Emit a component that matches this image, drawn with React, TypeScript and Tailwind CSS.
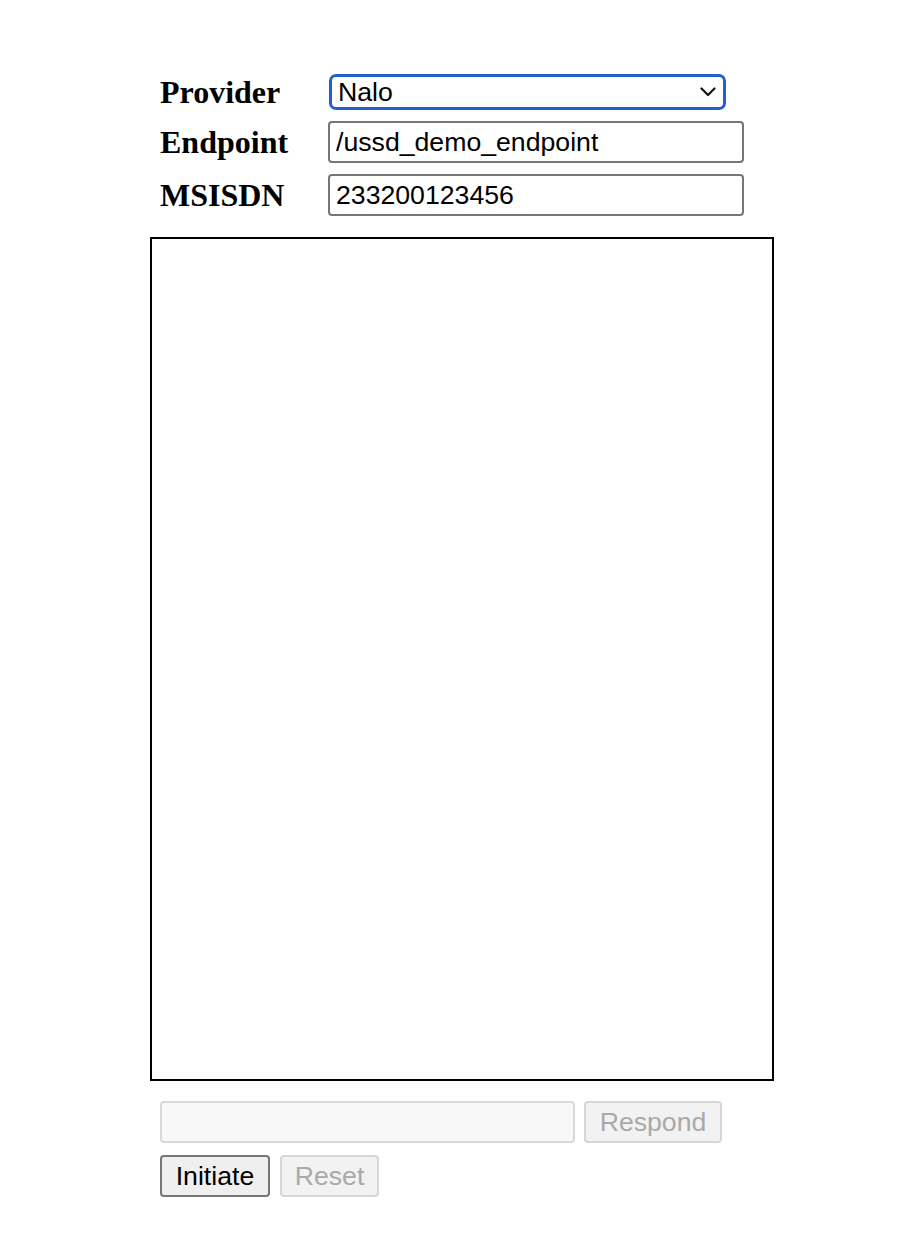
import React from "react";

export default function App() {
  const serif = { fontFamily: '"Liberation Serif", "Times New Roman", serif' } as React.CSSProperties;
  return (
    <div className="min-h-[1254px] w-[914px] bg-white pt-[74px] pl-[150px] text-black" style={{ fontFamily: '"Liberation Sans", Arial, sans-serif' }}>
      <div className="flex flex-col pl-[10px]">
        <div className="flex h-[36px] items-center">
          <div className="w-[169px] text-[32px] font-bold leading-none" style={serif}>Provider</div>
          <div className="relative h-[36px] w-[397px]">
            <select
              className="h-[36px] w-[397px] appearance-none rounded-[7px] border-[3px] border-[#2360cf] bg-white pl-[6px] text-[26.67px] leading-none text-black outline-none"
              defaultValue="Nalo"
            >
              <option>Nalo</option>
            </select>
            <svg className="pointer-events-none absolute right-[10px] top-[13px]" width="16" height="10" viewBox="0 0 16 10" fill="none">
              <path d="M1.5 1.5 L8 8 L14.5 1.5" stroke="#111" strokeWidth="2.2" strokeLinecap="round" strokeLinejoin="round" />
            </svg>
          </div>
        </div>
        <div className="mt-[11px] flex h-[42px] items-center">
          <div className="w-[168px] text-[32px] font-bold leading-none" style={serif}>Endpoint</div>
          <input
            className="h-[42px] w-[416px] rounded-[4px] border-2 border-[#767676] bg-white px-[6px] text-[26.67px] text-black outline-none"
            defaultValue="/ussd_demo_endpoint"
          />
        </div>
        <div className="mt-[11px] flex h-[42px] items-center">
          <div className="w-[168px] text-[32px] font-bold leading-none" style={serif}>MSISDN</div>
          <input
            className="h-[42px] w-[416px] rounded-[4px] border-2 border-[#767676] bg-white px-[6px] text-[26.67px] text-black outline-none"
            defaultValue="233200123456"
          />
        </div>
      </div>
      <div className="mt-[21px] h-[844px] w-[624px] border-2 border-black" />
      <div className="flex flex-col pl-[10px]">
        <div className="mt-[20px] flex h-[42px] items-center gap-[9px]">
          <input
            disabled
            className="h-[42px] w-[415px] rounded-[4px] border-2 border-[#d9d9d9] bg-[#f8f8f8] px-[6px] text-[26.67px] outline-none"
          />
          <button disabled className="h-[42px] w-[138px] rounded-[4px] border-2 border-[#d6d6d6] bg-[#f2f2f2] text-[26.67px] leading-none text-[#a9a9a9]">
            Respond
          </button>
        </div>
        <div className="mt-[12px] flex h-[42px] items-center gap-[10px]">
          <button className="h-[42px] w-[110px] rounded-[4px] border-2 border-[#767676] bg-[#efefef] text-[26.67px] leading-none text-black">
            Initiate
          </button>
          <button disabled className="h-[42px] w-[99px] rounded-[4px] border-2 border-[#d6d6d6] bg-[#f2f2f2] text-[26.67px] leading-none text-[#a9a9a9]">
            Reset
          </button>
        </div>
      </div>
    </div>
  );
}
